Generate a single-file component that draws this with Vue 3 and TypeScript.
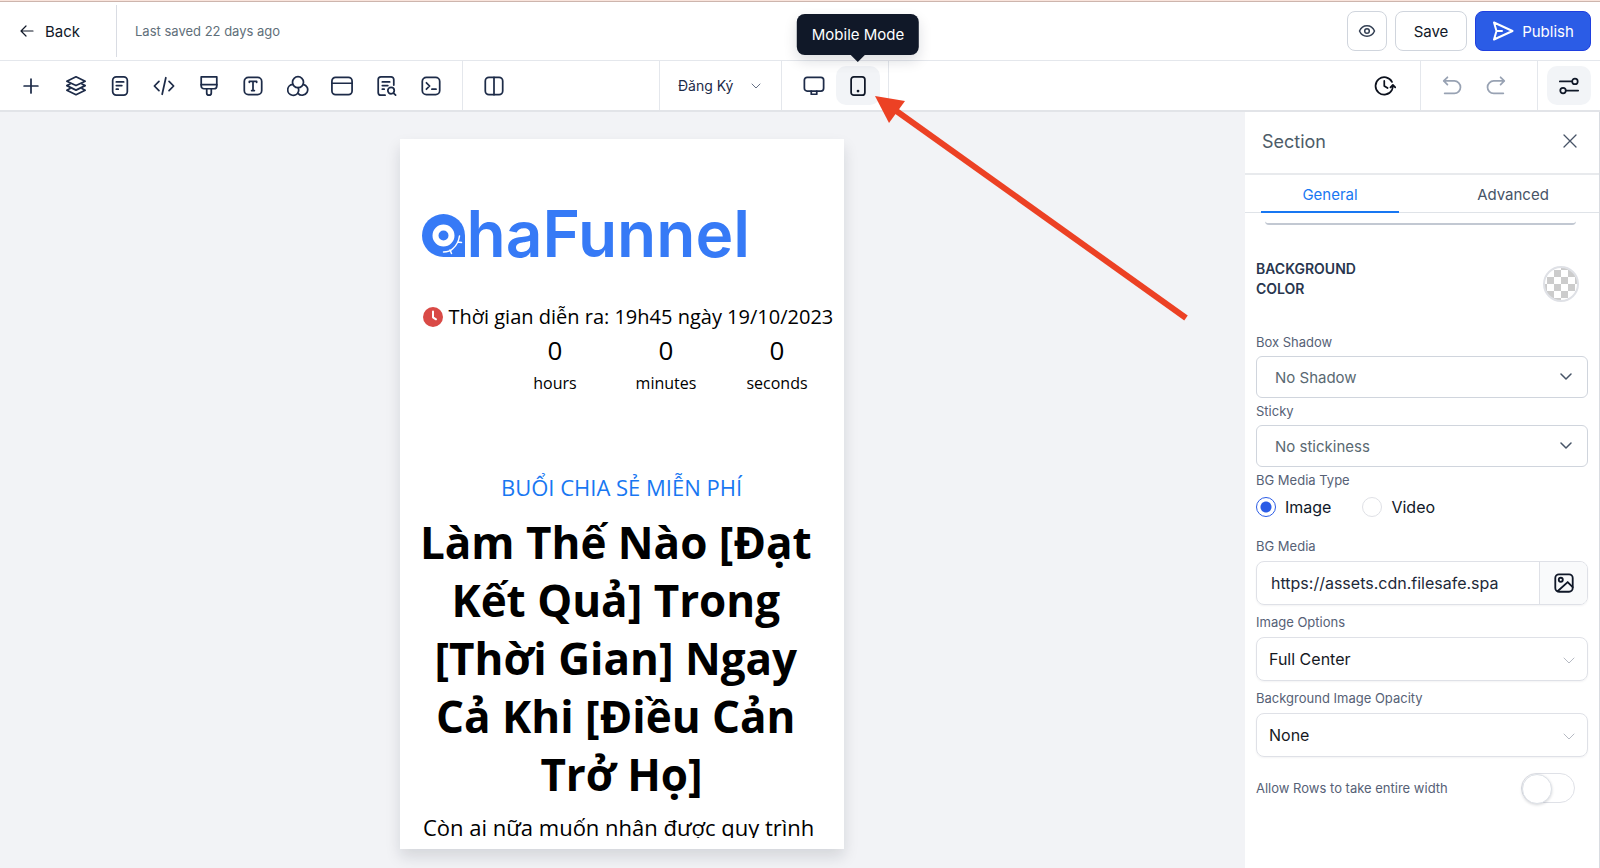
<script setup lang="ts">
import { ref } from 'vue'

interface Tool {
  name: string
  paths: string[]
}

interface Option {
  id: string
  label: string
  value: string
}

const tools: Tool[] = [
  { name: 'Add element', paths: ['M12 4.500v15M4.500 12h15'] },
  {
    name: 'Sections',
    paths: [
      'M12 2 2 6.800 12 11.500 22 6.800z',
      'M5.500 9.800 2 11.600l10 4.900 10-4.900-3.500-1.800',
      'M5.500 14.800 2 16.600l10 4.900 10-4.900-3.500-1.800',
    ],
  },
  {
    name: 'Pages',
    paths: ['M8 2h8a4 4 0 0 1 4 4v12a4 4 0 0 1-4 4H8a4 4 0 0 1-4-4V6a4 4 0 0 1 4-4z', 'M8 7.500h8M8 11.500h6M8 15.500h2'],
  },
  { name: 'Custom code', paths: ['M6.500 7 1.500 12l5 5M17.500 7l5 5-5 5M14 3l-4 18'] },
  {
    name: 'Styles',
    paths: ['M3.500 2h17v10a3 3 0 0 1-3 3h-11a3 3 0 0 1-3-3z', 'M3.500 10.500h17', 'M9.500 15v4.500a2.500 2.500 0 0 0 5 0V15'],
  },
  {
    name: 'Typography',
    paths: ['M7 2.500h10a4.500 4.500 0 0 1 4.500 4.500v10a4.500 4.500 0 0 1-4.500 4.500H7A4.500 4.500 0 0 1 2.500 17V7A4.500 4.500 0 0 1 7 2.500z', 'M8 8V7h8v1M12 7v10M10.500 17h3'],
  },
  {
    name: 'Colors',
    paths: [
      'M12 1.800a6 6 0 1 1 0 12 6 6 0 0 1 0-12z',
      'M6.300 10.200a6 6 0 1 0 6.200 7.800c.500-1.600.200-3-.500-4.200',
      'M17.700 10.200a6 6 0 1 1-5.700 9.800',
    ],
  },
  {
    name: 'Popup',
    paths: ['M5 2.500h14a4 4 0 0 1 4 4v11a4 4 0 0 1-4 4H5a4 4 0 0 1-4-4v-11a4 4 0 0 1 4-4z', 'M1 9h22'],
  },
  {
    name: 'SEO settings',
    paths: ['M20.500 11V5a3 3 0 0 0-3-3h-11a3 3 0 0 0-3 3v14a3 3 0 0 0 3 3H11', 'M8 7.500h8M8 11.500h6M8 15.500h2', 'M17.500 13.500a3.500 3.500 0 1 1 0 7 3.500 3.500 0 0 1 0-7zM20 19.500l2.500 2.500'],
  },
  {
    name: 'Tracking code',
    paths: ['M7 2.500h10a4.500 4.500 0 0 1 4.500 4.500v10a4.500 4.500 0 0 1-4.500 4.500H7A4.500 4.500 0 0 1 2.500 17V7A4.500 4.500 0 0 1 7 2.500z', 'M7 8.500l3.500 3.500L7 15.500M13 15.500h4.500'],
  },
]

const counters = ['hours', 'minutes', 'seconds']

const plainOptions: Option[] = [
  { id: 'box-shadow', label: 'Box Shadow', value: 'No Shadow' },
  { id: 'sticky', label: 'Sticky', value: 'No stickiness' },
]
const imageOptions: Option[] = [
  { id: 'image-options', label: 'Image Options', value: 'Full Center' },
  { id: 'image-opacity', label: 'Background Image Opacity', value: 'None' },
]

const mediaType = ref('image')
const mediaUrl = ref('https://assets.cdn.filesafe.spa')
const fullWidth = ref(false)
</script>

<template>
  <div class="editor">
    <header class="topbar">
      <button class="back" type="button">
        <svg width="16" height="16" viewBox="0 0 16 16"><path d="M14 8H2.500M7 3 2 8l5 5" /></svg>
        Back
      </button>
      <span class="saved">Last saved 22 days ago</span>
      <div class="actions">
        <button class="btn eye" type="button" aria-label="Preview">
          <svg width="18" height="18" viewBox="0 0 18 18"><path d="M1.500 9C3 5.500 5.800 3.800 9 3.800S15 5.500 16.500 9C15 12.500 12.200 14.200 9 14.200S3 12.500 1.500 9z" /><circle cx="9" cy="9" r="2.300" /></svg>
        </button>
        <button class="btn save" type="button">Save</button>
        <button class="btn publish" type="button">
          <svg width="22" height="22" viewBox="0 0 22 22"><path d="M2 2.500 20.500 11 2 19.500 4.500 11zM4.500 11H10" /></svg>
          Publish
        </button>
      </div>
    </header>

    <nav class="toolbar" aria-label="Editor tools">
      <div class="group tools">
        <button v-for="tool in tools" :key="tool.name" class="tool" type="button" :aria-label="tool.name">
          <svg width="22" height="22" viewBox="0 0 24 24"><path v-for="d in tool.paths" :key="d" :d="d" /></svg>
        </button>
      </div>
      <div class="group columns">
        <button class="tool" type="button" aria-label="Columns">
          <svg width="22" height="22" viewBox="0 0 24 24"><rect x="2.500" y="2.500" width="19" height="19" rx="4" /><path d="M12 2.500v19" /></svg>
        </button>
      </div>
      <div class="group page-group">
        <select class="page-select" aria-label="Page">
          <option>Đăng Ký</option>
        </select>
        <svg class="page-chevron" width="10" height="10" viewBox="0 0 10 10"><path d="M1 3l4 4 4-4" /></svg>
      </div>
      <div class="group devices">
        <button class="tool" type="button" aria-label="Desktop mode">
          <svg width="22" height="22" viewBox="0 0 24 24"><rect x="1.500" y="2.500" width="21" height="15" rx="3" /><path d="M9 17.500V21h6v-3.500" /></svg>
        </button>
        <button class="tool active" type="button" aria-describedby="mode-tip" aria-label="Mobile mode">
          <svg width="22" height="22" viewBox="0 0 24 24"><rect x="4.500" y="2" width="15" height="20" rx="3" /><circle class="dot" cx="12" cy="17.500" r="1.500" /></svg>
          <span id="mode-tip" class="tooltip" role="tooltip">Mobile Mode</span>
        </button>
      </div>
      <div class="group history">
        <button class="tool ink" type="button" aria-label="Version history">
          <svg width="22" height="22" viewBox="0 0 24 24"><path d="M19.600 7.500A9.500 9.500 0 1 0 19.500 16.500c.700-1.300 1.100-2.800 1.100-5M18 13.500l2.600-2.800 2.600 2.800M11.200 6.500V12l3.600 2.300" /></svg>
        </button>
      </div>
      <div class="group undo">
        <button class="tool muted" type="button" aria-label="Undo">
          <svg width="22" height="22" viewBox="0 0 24 24"><path d="M7 2.500 3 6.500l4 4M3 6.500h11.500a6.500 6.500 0 0 1 0 13.500H4" /></svg>
        </button>
        <button class="tool muted" type="button" aria-label="Redo">
          <svg width="22" height="22" viewBox="0 0 24 24"><path d="M17 2.500l4 4-4 4M21 6.500H9.500a6.500 6.500 0 0 0 0 13.500H20" /></svg>
        </button>
      </div>
      <div class="group settings">
        <button class="tool active" type="button" aria-label="Settings">
          <svg width="22" height="22" viewBox="0 0 24 24"><path d="M2 7h13M9 17h13" /><circle cx="18.500" cy="7" r="3" /><circle cx="5.500" cy="17" r="3" /></svg>
        </button>
      </div>
    </nav>

    <div class="workspace">
      <main class="canvas">
        <article class="phone">
          <div class="phone-view">
            <div class="logo">
              <svg width="43" height="43" viewBox="0 0 43 43" aria-hidden="true">
                <path class="mark" d="M21.500 0A21.500 21.500 0 0 1 43 21.500V43H21.500a21.500 21.500 0 0 1 0-43z" />
                <circle class="ring" cx="21.500" cy="21.500" r="8" />
                <path class="twig" d="M21.500 38c4 0 7-1 9.500-3.500 3.500-3 5.500-6 6.500-12.500M28 36l1.500 3.500M36 28l3.500.500" />
              </svg>
              <span>haFunnel</span>
            </div>
            <p class="when">
              <svg width="20" height="20" viewBox="0 0 20 20" aria-hidden="true"><circle cx="10" cy="10" r="10" /><path d="M10 4.500v5.800l3 2" /></svg>
              Thời gian diễn ra: 19h45 ngày 19/10/2023
            </p>
            <div class="countdown">
              <div v-for="unit in counters" :key="unit" class="counter">
                <strong>0</strong>
                <span>{{ unit }}</span>
              </div>
            </div>
            <p class="kicker">BUỔI CHIA SẺ MIỄN PHÍ</p>
            <h1>Làm Thế Nào [Đạt&nbsp;<br />Kết Quả] Trong&nbsp;<br />[Thời Gian] Ngay&nbsp;<br />Cả Khi [Điều Cản&nbsp;<br />Trở Họ]</h1>
            <p class="lead">Còn ai nữa muốn nhân được quy trình&nbsp;</p>
          </div>
        </article>
      </main>

      <aside class="panel">
        <div class="panel-head">
          <h2>Section</h2>
          <button type="button" aria-label="Close">
            <svg width="16" height="16" viewBox="0 0 16 16"><path d="M2 2l12 12M14 2 2 14" /></svg>
          </button>
        </div>
        <div class="tabs" role="tablist">
          <button class="tab selected" type="button" role="tab" aria-selected="true">General</button>
          <button class="tab" type="button" role="tab" aria-selected="false">Advanced</button>
        </div>
        <form class="fields" @submit.prevent>
          <div class="scrolled-edge"></div>
          <div class="color-row">
            <label for="bg-color">BACKGROUND<br />COLOR</label>
            <button id="bg-color" class="swatch" type="button" aria-label="Background color"></button>
          </div>

          <div v-for="o in plainOptions" :key="o.id" class="field">
            <label :for="o.id">{{ o.label }}</label>
            <div class="select-wrap">
              <select :id="o.id"><option>{{ o.value }}</option></select>
              <svg width="12" height="12" viewBox="0 0 12 12"><path d="M1 3l5 5 5-5" /></svg>
            </div>
          </div>

          <fieldset>
            <legend>BG Media Type</legend>
            <div class="radios">
              <label><input v-model="mediaType" type="radio" name="media" value="image" />Image</label>
              <label><input v-model="mediaType" type="radio" name="media" value="video" />Video</label>
            </div>
          </fieldset>

          <div class="field large">
            <label for="bg-media">BG Media</label>
            <div class="media">
              <input id="bg-media" v-model="mediaUrl" type="text" />
              <button type="button" aria-label="Choose image">
                <svg width="22" height="22" viewBox="0 0 24 24"><rect x="2.500" y="2.500" width="19" height="19" rx="4" /><circle cx="8.500" cy="8.500" r="2.200" /><path d="M5 21 16 11l5.500 5.500" /></svg>
              </button>
            </div>
          </div>

          <div v-for="o in imageOptions" :key="o.id" class="field large">
            <label :for="o.id">{{ o.label }}</label>
            <div class="select-wrap pale">
              <select :id="o.id"><option>{{ o.value }}</option></select>
              <svg width="12" height="12" viewBox="0 0 12 12"><path d="M1 3l5 5 5-5" /></svg>
            </div>
          </div>

          <div class="toggle-row">
            <label for="full-width">Allow Rows to take entire width</label>
            <input id="full-width" v-model="fullWidth" type="checkbox" role="switch" />
          </div>
        </form>
      </aside>
    </div>

    <svg class="pointer" width="314" height="226" viewBox="0 0 314 226" aria-hidden="true">
      <path class="shaft" d="M20 14 311 222" />
      <path class="head" d="M0 0 30 5 14 27z" />
    </svg>
  </div>
</template>

<style>
body {
  margin: 0;
}
</style>

<style scoped>
* {
  box-sizing: border-box;
}

.editor {
  position: relative;
  display: flex;
  flex-direction: column;
  height: 100vh;
  overflow: hidden;
  border-top: 1px solid #f9e4dc;
  background: #fff;
  color: #101828;
  font-family: Inter, "Noto Sans", sans-serif;
  font-size: 15px;
}

button,
input,
select {
  margin: 0;
  padding: 0;
  border: 0;
  background: none;
  color: inherit;
  font: inherit;
  appearance: none;
}

svg {
  flex: none;
  fill: none;
  stroke: currentColor;
  stroke-width: 1.500;
  stroke-linecap: round;
  stroke-linejoin: round;
}

.topbar {
  display: flex;
  align-items: center;
  flex: none;
  height: 60px;
  padding-right: 9px;
  border-top: 1px solid #cdb5ad;
  border-bottom: 1px solid #e4e7ec;
}

.back {
  display: flex;
  align-items: center;
  gap: 10px;
  width: 117px;
  height: 52px;
  padding-left: 19px;
  border-right: 1px solid #d9dce3;
}

.back svg {
  stroke-width: 1.200;
}

.saved {
  padding-left: 18px;
  color: #5f6f7a;
  font-size: 13px;
}

.actions {
  display: flex;
  gap: 8px;
  margin-left: auto;
}

.btn {
  display: flex;
  align-items: center;
  justify-content: center;
  height: 40px;
  border: 1px solid #d0d5dd;
  border-radius: 8px;
}

.eye {
  width: 40px;
  color: #344054;
}

.save {
  width: 72px;
}

.publish {
  gap: 8px;
  width: 116px;
  border-color: #1f3fe0;
  background: #2b5ce6;
  color: #fff;
}

.publish svg {
  stroke-width: 2;
}

.toolbar {
  display: flex;
  flex: none;
  height: 51px;
  border-bottom: 2px solid #e2e4e8;
  color: #1d2b48;
}

.group {
  display: flex;
  align-items: center;
  border-right: 1px solid #e4e7ec;
}

.tool {
  position: relative;
  display: flex;
  flex: none;
  align-items: center;
  justify-content: center;
  width: 44px;
  height: 39px;
  border-radius: 10px;
}

.tool svg {
  stroke-width: 1.900;
}

.tools {
  width: 463px;
  padding: 0 9px;
}

.tools .tool {
  flex: 1;
}

.columns {
  width: 197px;
  padding-left: 9px;
}

.page-group {
  position: relative;
  width: 122px;
}

.page-select {
  width: 100%;
  height: 100%;
  padding-left: 18px;
  font-size: 14px;
}

.page-chevron {
  position: absolute;
  right: 20px;
  pointer-events: none;
}

.page-chevron path {
  stroke: #667085;
  stroke-width: 1;
}

.devices {
  width: 107px;
  padding-left: 10px;
}

.active {
  background: #f2f4f7;
  color: #101828;
}

.dot {
  fill: currentColor;
  stroke: none;
}

.tooltip {
  position: absolute;
  bottom: calc(100% + 11px);
  left: 50%;
  z-index: 3;
  padding: 11px 15px;
  border-radius: 8px;
  background: #101828;
  box-shadow: 0 6px 14px rgb(16 24 40 / 14%);
  color: #fff;
  line-height: 19px;
  white-space: nowrap;
  transform: translateX(-50%);
}

.tooltip::after {
  position: absolute;
  top: 100%;
  left: 50%;
  margin-left: -7px;
  border: 7px solid transparent;
  border-top-color: #101828;
  border-bottom: 0;
  content: "";
}

.history {
  flex: 1;
  justify-content: flex-end;
  padding-right: 13px;
}

.ink {
  color: #0c111d;
}

.undo {
  width: 117px;
  padding-left: 9px;
}

.muted {
  color: #98a2b3;
}

.settings {
  padding: 0 9px;
  border-right: 0;
}

.workspace {
  display: flex;
  flex: 1;
  min-height: 0;
}

.canvas {
  display: flex;
  flex: 1;
  justify-content: center;
  padding: 27px 18px 19px 16px;
  background: #f2f3f6;
}

.phone {
  width: 444px;
  padding-bottom: 11px;
  background: #fff;
  box-shadow: 0 8px 14px rgb(16 24 40 / 13%);
  color: #000;
  font-family: "Open Sans", "Noto Sans", sans-serif;
}

.phone-view {
  height: 100%;
  overflow: hidden;
}

.logo {
  display: flex;
  align-items: flex-end;
  gap: 2px;
  height: 118px;
  padding-left: 22px;
  color: #367af6;
  font: 600 64px/32px Inter, sans-serif;
}

.logo span {
  padding-bottom: 7px;
}

.mark {
  fill: #367af6;
  stroke: none;
}

.ring {
  stroke: #fff;
  stroke-width: 6;
}

.twig {
  stroke: #fff;
  stroke-width: 1.500;
}

.when {
  display: flex;
  align-items: center;
  gap: 6px;
  margin: 44px 0 0;
  padding-left: 23px;
  font-size: 20px;
  line-height: 32px;
  white-space: nowrap;
}

.when circle {
  fill: #d94a46;
  stroke: none;
}

.when path {
  stroke: #fff;
  stroke-width: 2;
}

.countdown {
  display: grid;
  grid-template-columns: repeat(3, 111px);
  padding-left: 100px;
  text-align: center;
}

.counter strong {
  display: block;
  font-size: 26px;
  font-weight: 400;
  line-height: 35px;
}

.counter span {
  display: block;
  font-size: 16px;
  line-height: 30px;
}

.kicker {
  margin: 71px 0 0;
  color: #1877f2;
  font-size: 22px;
  line-height: 36px;
  text-align: center;
}

h1 {
  margin: 8px 0 0;
  font-size: 44px;
  font-weight: 700;
  line-height: 58px;
  text-align: center;
  white-space: nowrap;
}

.lead {
  margin: 8px 0 0;
  font-size: 22px;
  line-height: 32px;
  text-align: center;
  white-space: nowrap;
}

.panel {
  flex: none;
  width: 355px;
  border-right: 1px solid #d9dce1;
  background: #fff;
}

.panel-head {
  display: flex;
  align-items: center;
  justify-content: space-between;
  height: 63px;
  padding: 0 21px 4px 17px;
  border-bottom: 2px solid #e8eaed;
  color: #475467;
}

.panel-head button {
  display: flex;
}

.panel-head svg {
  stroke-width: 1.300;
}

h2 {
  margin: 0;
  padding-top: 2px;
  color: #4d5c68;
  font-size: 18px;
  font-weight: 400;
}

.tabs {
  display: flex;
  justify-content: space-between;
  height: 38px;
  padding: 0 17px 0 16px;
  border-bottom: 1px solid #dfe3e8;
}

.tab {
  width: 138px;
  height: 38px;
  color: #475467;
}

.selected {
  box-shadow: inset 0 -2px #1877f2;
  color: #1877f2;
}

.fields {
  padding: 8px 11px 0;
}

.scrolled-edge {
  height: 4px;
  margin: 0 12px 0 9px;
  border-bottom: 2px solid #c2c8d2;
  border-radius: 0 0 4px 4px;
}

.color-row {
  display: flex;
  align-items: center;
  justify-content: space-between;
  height: 90px;
  margin-top: 14px;
  padding-right: 9px;
}

.color-row label {
  padding-bottom: 10px;
  color: #28364e;
  font-size: 14px;
  font-weight: 600;
  line-height: 20px;
}

.swatch {
  width: 36px;
  height: 36px;
  border: 2px solid #dfe1e6;
  border-radius: 50%;
  background: repeating-conic-gradient(#ccc 0 25%, #fff 0 50%) 9px 9px / 14px 14px;
}

.field label,
legend,
.toggle-row label {
  display: block;
  color: #566176;
  font-size: 13px;
  line-height: 27px;
}

.select-wrap {
  position: relative;
}

.select-wrap select {
  display: block;
  width: 100%;
  height: 42px;
  padding-left: 18px;
  border: 1px solid #d0d5dd;
  border-radius: 6px;
  color: #5a6972;
}

.select-wrap svg {
  position: absolute;
  top: 15px;
  right: 16px;
  color: #475467;
  pointer-events: none;
}

.select-wrap.pale select {
  height: 44px;
  padding-left: 12px;
  border-color: #dfe1e7;
  border-radius: 8px;
  box-shadow: 0 1px 2px rgb(16 24 40 / 5%);
  color: #16191f;
  font-size: 16px;
}

.pale svg {
  top: 18px;
  right: 13px;
  color: #b6bac3;
  stroke-width: 1;
}

fieldset {
  min-width: 0;
  margin: 0;
  padding: 0;
  border: 0;
}

legend {
  padding: 0;
}

.radios {
  display: flex;
  gap: 31px;
  height: 35px;
}

.radios label {
  display: flex;
  align-items: center;
  gap: 9px;
  height: 26px;
  font-size: 16px;
}

.radios input {
  width: 20px;
  height: 20px;
  border: 1px solid #dfe1e6;
  border-radius: 50%;
}

.radios input:checked {
  border-color: #2b5ce6;
  background: radial-gradient(circle, #2b5ce6 5px, #fff 6px);
}

.large label {
  padding-top: 3px;
  line-height: 29px;
}

.media {
  display: flex;
  height: 44px;
  overflow: hidden;
  border: 1px solid #dfe1e7;
  border-radius: 8px;
  box-shadow: 0 1px 2px rgb(16 24 40 / 5%);
}

.media input {
  flex: 1;
  min-width: 0;
  padding: 0 14px;
  color: #1d2939;
  font-size: 16px;
}

.media button {
  display: flex;
  align-items: center;
  justify-content: center;
  width: 48px;
  border-left: 1px solid #dfe1e7;
  background: #f9fafb;
}

.media svg {
  stroke-width: 2;
}

.toggle-row {
  display: flex;
  align-items: center;
  justify-content: space-between;
  height: 62px;
  padding-right: 13px;
}

.toggle-row input {
  width: 54px;
  height: 30px;
  border: 1px solid #dfe1e7;
  border-radius: 15px;
}

.toggle-row input::before {
  display: block;
  width: 28px;
  height: 28px;
  border: 1px solid #dde1e7;
  border-radius: 50%;
  background: #fff;
  box-shadow: 0 1px 3px rgb(16 24 40 / 18%);
  content: "";
}

.toggle-row input:checked::before {
  margin-left: 24px;
}

.pointer {
  position: absolute;
  top: 95px;
  left: 875px;
  z-index: 4;
  pointer-events: none;
}

.shaft {
  stroke: #ec4124;
  stroke-width: 6;
  stroke-linecap: butt;
}

.head {
  fill: #ec4124;
  stroke: none;
}
</style>
